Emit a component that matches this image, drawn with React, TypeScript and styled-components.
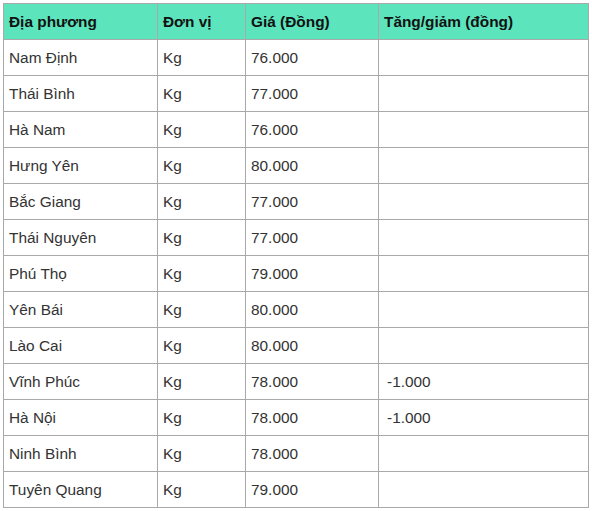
import React from 'react';
import styled, {createGlobalStyle} from 'styled-components';

const GlobalStyle = createGlobalStyle`
  body {
    margin: 0;
    background: #ffffff;
  }
`

const rows = [
    ['Nam Định', 'Kg', '76.000', ''],
    ['Thái Bình', 'Kg', '77.000', ''],
    ['Hà Nam', 'Kg', '76.000', ''],
    ['Hưng Yên', 'Kg', '80.000', ''],
    ['Bắc Giang', 'Kg', '77.000', ''],
    ['Thái Nguyên', 'Kg', '77.000', ''],
    ['Phú Thọ', 'Kg', '79.000', ''],
    ['Yên Bái', 'Kg', '80.000', ''],
    ['Lào Cai', 'Kg', '80.000', ''],
    ['Vĩnh Phúc', 'Kg', '78.000', '-1.000'],
    ['Hà Nội', 'Kg', '78.000', '-1.000'],
    ['Ninh Bình', 'Kg', '78.000', ''],
    ['Tuyên Quang', 'Kg', '79.000', ''],
]

const widths = [154, 88, 133, 210]

export default function App() {
    return (
        <Wrapper>
            <GlobalStyle/>
            <PriceTable>
                <colgroup>
                    {widths.map((w, i) => <col key={i} style={{width: w}}/>)}
                </colgroup>
                <thead>
                <tr>
                    <HeadCell>Địa phương</HeadCell>
                    <HeadCell>Đơn vị</HeadCell>
                    <HeadCell>Giá (Đồng)</HeadCell>
                    <HeadCell>Tăng/giảm (đồng)</HeadCell>
                </tr>
                </thead>
                <tbody>
                {rows.map((r, i) => (
                    <tr key={i}>
                        {r.map((c, j) => <Cell key={j} $pad={j === 3 && c ? 8 : 5}>{c}</Cell>)}
                    </tr>
                ))}
                </tbody>
            </PriceTable>
        </Wrapper>
    );
}

const Wrapper = styled.div`
  padding: 3px;
`

const PriceTable = styled.table`
  border-collapse: collapse;
  table-layout: fixed;
  width: 585px;
  font-family: "Liberation Sans", Arial, sans-serif;
`

const HeadCell = styled.th`
  height: 35px;
  padding: 0 5px;
  background: #5ce5bd;
  border: 1px solid #a9a9a9;
  text-align: left;
  font-size: 15.4px;
  font-weight: bold;
  color: #111;
`

const Cell = styled.td<{ $pad: number }>`
  height: 35px;
  padding: 0 5px 0 ${p => p.$pad}px;
  border: 1px solid #a9a9a9;
  font-size: 15.4px;
  color: #333;
`
